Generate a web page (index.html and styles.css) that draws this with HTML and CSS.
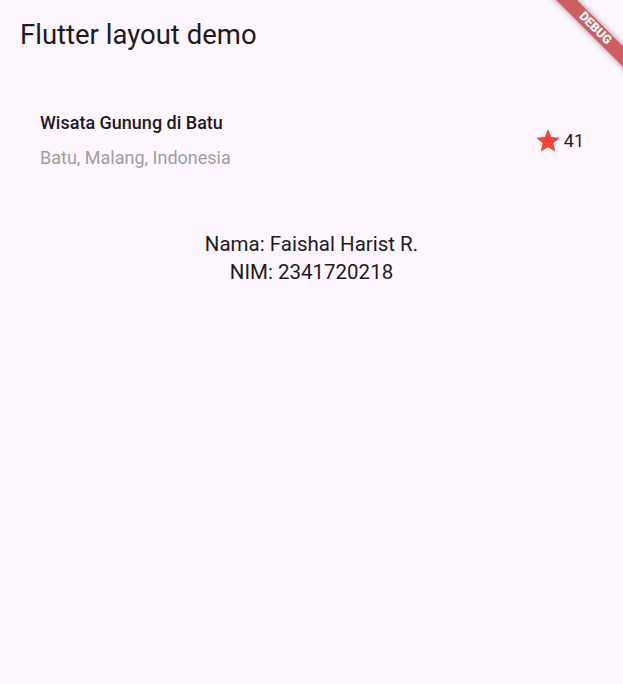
FILE: index.html
```html
<!DOCTYPE html>
<html lang="en">
<head>
<meta charset="utf-8">
<title>Flutter layout demo</title>
<link rel="stylesheet" href="styles.css">
</head>
<body>
<div class="app">
  <header class="appbar">
    <h1 class="appbar-title">Flutter layout demo</h1>
  </header>
  <main class="content">
    <section class="title-section">
      <div class="title-text">
        <div class="place-name">Wisata Gunung di Batu</div>
        <div class="place-location">Batu, Malang, Indonesia</div>
      </div>
      <div class="rating">
        <svg class="star" viewBox="0 0 24 24" width="28" height="28" aria-hidden="true">
          <path d="M12 17.27L18.18 21l-1.64-7.03L22 9.24l-7.19-.61L12 2 9.19 8.63 2 9.24l5.46 4.73L5.82 21z"/>
        </svg>
        <span class="rating-count">41</span>
      </div>
    </section>
    <section class="identity">
      <p>Nama: Faishal Harist R.</p>
      <p>NIM: 2341720218</p>
    </section>
  </main>
  <div class="debug-banner"><span>DEBUG</span></div>
</div>
</body>
</html>
```
FILE: styles.css
```css
html, body {
  margin: 0;
  padding: 0;
}
body {
  background: #fef7ff;
  font-family: Roboto, "Noto Sans", sans-serif;
  color: #1d1b20;
  width: 623px;
  height: 684px;
  overflow: hidden;
}
.app {
  position: relative;
  width: 623px;
  height: 684px;
  overflow: hidden;
}
.appbar {
  box-sizing: border-box;
  height: 64px;
  padding: 19px 0 0 20px;
}
.appbar-title {
  margin: 0;
  font-size: 27.5px;
  font-weight: 400;
  line-height: 32px;
  color: #1d1b20;
}
.content {
  display: flex;
  flex-direction: column;
}
.title-section {
  display: flex;
  align-items: center;
  padding: 48px 39px 61px 40px;
}
.title-text {
  flex: 1;
  display: flex;
  flex-direction: column;
  gap: 13px;
}
.place-name {
  font-size: 18px;
  font-weight: 500;
  line-height: 22px;
  color: #1d1b20;
}
.place-location {
  font-size: 18px;
  line-height: 22px;
  color: #9e9e9e;
}
.rating {
  display: flex;
  align-items: center;
  gap: 2px;
}
.star {
  fill: #f44336;
  display: block;
}
.rating-count {
  font-size: 18px;
  line-height: 22px;
  color: #1d1b20;
}
.identity {
  text-align: center;
  font-size: 20.5px;
  line-height: 28px;
}
.identity p {
  margin: 0;
}
.debug-banner {
  position: absolute;
  left: calc(594.5px - 70px);
  top: calc(28.5px - 7.5px);
  width: 140px;
  height: 15px;
  background: rgba(183, 28, 28, 0.7);
  box-shadow: 0 0 6px rgba(0, 0, 0, 0.4);
  transform: rotate(45deg);
  display: flex;
  align-items: center;
  justify-content: center;
}
.debug-banner span {
  color: #fff;
  font-family: Roboto, sans-serif;
  font-weight: 900;
  font-size: 12.5px;
  line-height: 1;
}
```
